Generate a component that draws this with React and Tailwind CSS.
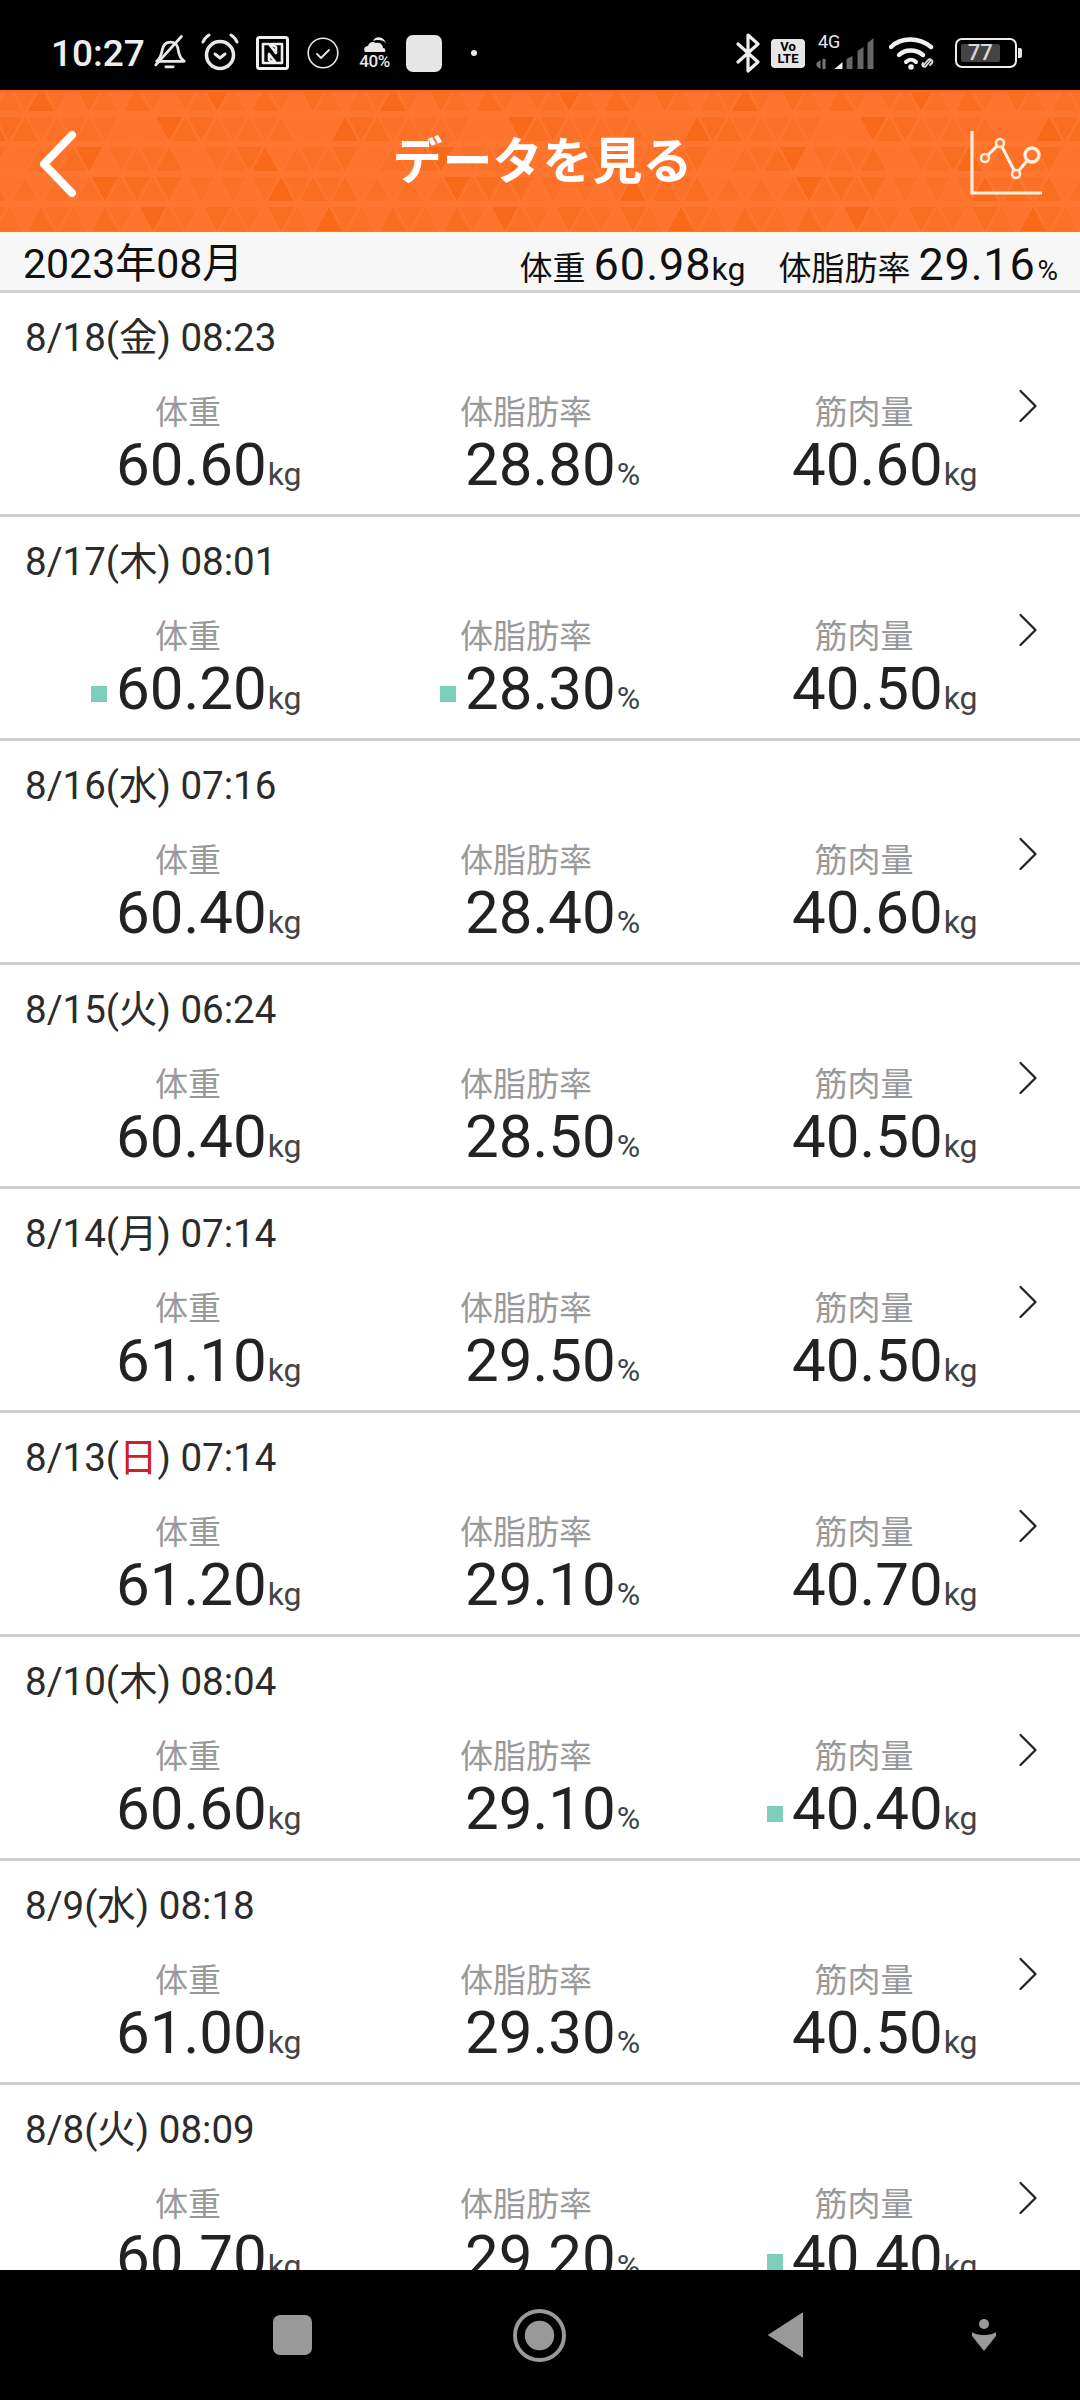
import { ChevronRight } from "lucide-react";

const font = { fontFamily: '"Roboto", "Noto Sans CJK JP", sans-serif' };

const records = [
  { date: "8/18(", day: "金", time: ") 08:23", w: "60.60", f: "28.80", m: "40.60" },
  { date: "8/17(", day: "木", time: ") 08:01", w: "60.20", f: "28.30", m: "40.50", wMark: true, fMark: true },
  { date: "8/16(", day: "水", time: ") 07:16", w: "60.40", f: "28.40", m: "40.60" },
  { date: "8/15(", day: "火", time: ") 06:24", w: "60.40", f: "28.50", m: "40.50" },
  { date: "8/14(", day: "月", time: ") 07:14", w: "61.10", f: "29.50", m: "40.50" },
  { date: "8/13(", day: "日", time: ") 07:14", w: "61.20", f: "29.10", m: "40.70", sunday: true },
  { date: "8/10(", day: "木", time: ") 08:04", w: "60.60", f: "29.10", m: "40.40", mMark: true },
  { date: "8/9(", day: "水", time: ") 08:18", w: "61.00", f: "29.30", m: "40.50" },
  { date: "8/8(", day: "火", time: ") 08:09", w: "60.70", f: "29.20", m: "40.40", mMark: true },
];

// header texture: rows of faint triangles, darkness varies from one to the next
const triangles = [];
for (let row = 0; row < 5; row++) {
  for (let col = -1; col < 70; col++) {
    const x = col * 16 - 4;
    const y = row * 30 - 8;
    const up = (col + row) % 2 === 0;
    const seed = (col * 7 + row * 13 + col * row * 3 + 40) % 11;
    const opacity = seed < 3 ? 0.1 : seed < 8 ? 0.25 : seed < 10 ? 0.42 : 0.65;
    const points = up
      ? `${x},${y + 27} ${x + 13},${y + 3} ${x + 26},${y + 27}`
      : `${x},${y + 3} ${x + 26},${y + 3} ${x + 13},${y + 27}`;
    triangles.push(<polygon key={`${row}-${col}`} points={points} fill="#f4640e" opacity={opacity} />);
  }
}

const StatusLeft = () => (
  <div className="flex items-center">
    <span className="text-[37px] leading-none text-[#eeeeee] font-medium ml-[51px] w-[102px]">10:27</span>
    {/* muted bell */}
    <svg className="w-[33px] h-[40px]" viewBox="0 0 36 40" fill="none" stroke="#e8e8e8" strokeWidth="3" strokeLinecap="round" strokeLinejoin="round">
      <path d="M4 29c4-3 5-6 6-12 1-6 4-9 9-9 4 0 7 2 8 6 1 5 1 11 7 15z" />
      <path d="M14 35h8" />
      <path d="M3 33 31 2" />
    </svg>
    {/* alarm */}
    <svg className="w-[38px] h-[40px] ml-[15px]" viewBox="0 0 38 40" fill="none" stroke="#e8e8e8" strokeLinecap="round" strokeLinejoin="round">
      <circle cx="19" cy="22" r="13.5" strokeWidth="3.5" />
      <path d="M2 9c1-3 3-5 6-7M36 9c-1-3-3-5-6-7" strokeWidth="3" />
      <path d="M14 21l5 4 5-4" strokeWidth="3" />
    </svg>
    {/* nfc */}
    <svg className="w-[33px] h-[34px] ml-[17px]" viewBox="0 0 33 34" fill="none">
      <rect x="1.5" y="1.5" width="30" height="31" rx="2" stroke="#f0f0f0" strokeWidth="3" />
      <path d="M7 27V8h6l7 9v-6l-5-3h11v19h-6l-7-9v6l5 3z" stroke="#f0f0f0" strokeWidth="2.6" strokeLinejoin="round" />
    </svg>
    {/* check circle */}
    <svg className="w-[32px] h-[32px] ml-[18px]" viewBox="0 0 32 32" fill="none" stroke="#e8e8e8" strokeLinecap="round" strokeLinejoin="round">
      <circle cx="16" cy="16" r="14.8" strokeWidth="1.6" />
      <path d="M10 17l4 4 8-8" strokeWidth="1.8" />
    </svg>
    {/* weather */}
    <div className="flex flex-col items-center ml-[19px] w-[33px]">
      <svg className="w-[24px] h-[17px]" viewBox="0 0 24 17" fill="#e8e8e8">
        <path d="M2 16c-2-3 0-6 3-6 1-4 5-5 8-3 3-1 7 1 7 5 2 0 3 2 2 4z" />
        <path d="M10 5c1-3 5-5 9-3 2 1 3 3 4 5-3-3-8-4-13-2z" />
      </svg>
      <span className="text-[17px] leading-[17px] text-[#e8e8e8] font-medium tracking-[-0.5px]">40%</span>
    </div>
    <div className="w-[36px] h-[37px] rounded-[7px] bg-[#e6e6e6] ml-[15px]" />
    <div className="w-[6px] h-[6px] rounded-full bg-[#e8e8e8] ml-[29px]" />
  </div>
);

const StatusRight = () => (
  <div className="flex items-center mr-[58px]">
    {/* bluetooth */}
    <svg className="w-[24px] h-[40px]" viewBox="0 0 24 40" fill="none" stroke="#eeeeee" strokeWidth="3.2" strokeLinejoin="round" strokeLinecap="round">
      <path d="M2 11l20 18-10 9V2l10 9L2 29" />
    </svg>
    {/* volte */}
    <div className="w-[34px] h-[29px] ml-[11px] rounded-[4px] bg-[#e6e6e6] flex flex-col items-center justify-center text-black text-[13px] leading-[12px] font-bold">
      <span>Vo</span>
      <span>LTE</span>
    </div>
    {/* 4g and signal */}
    <div className="relative w-[59px] h-[36px] ml-[10px]">
      <span className="absolute left-[3px] -top-[3px] text-[18px] leading-[20px] text-[#e8e8e8]">4G</span>
      <svg className="absolute inset-0 w-[59px] h-[36px]" viewBox="0 0 58 36">
        <path d="M1 28l4-3v9l-4-3zM7 24h3l0 10H7z" fill="#777777" />
        <path d="M19 34l8-7v7z" fill="#f0f0f0" />
        <path d="M31 34V24l6-3v13zM42 34V16l6-4v22zM52 34V8l6-5v31z" fill="#666666" />
      </svg>
    </div>
    {/* wifi */}
    <svg className="w-[50px] h-[36px] ml-[15px]" viewBox="0 0 50 36" fill="none" stroke="#f2f2f2" strokeLinecap="round">
      <path d="M2 12C12 2 30 2 42 12" strokeWidth="4.4" />
      <path d="M10 20c6-6 17-6 24 0" strokeWidth="4.4" />
      <path d="M17 27c3-3 7-3 10 0" strokeWidth="4" />
      <circle cx="22" cy="32" r="2" fill="#f2f2f2" strokeWidth="1.5" />
      <path d="M34 31l5-6c2-2 6 1 4 3l-2 2M42 25l-5 6c-2 2-5 0-3-3" stroke="#e0e0e0" strokeWidth="1.8" />
    </svg>
    {/* battery */}
    <div className="flex items-center ml-[16px]">
      <div className="w-[62px] h-[30px] rounded-[7px] border-[2.5px] border-[#eeeeee] p-[4px] flex">
        <div className="w-[77%] h-full bg-[#444444] rounded-[2px] flex items-center justify-center text-[22px] leading-none font-medium text-[#d8d8d8]">77</div>
      </div>
      <div className="w-[4px] h-[10px] ml-[1px] rounded-r-[2px] bg-[#e8e8e8]" />
    </div>
  </div>
);

const Value = ({ value, unit, mark, className }) => (
  <div className={`flex items-baseline leading-none mt-[6px] ${className}`}>
    <span className="w-[25px] h-[16px] flex-none self-center mt-[10px]">
      {mark && <span className="block w-[16px] h-[16px] bg-[#7dcfbb]" />}
    </span>
    <span className="text-[60px] leading-[56px] text-[#222222]">{value}</span>
    <span className="text-[32px] text-[#444444] ml-[1px]">{unit}</span>
  </div>
);

const Row = ({ r }) => (
  <div className="flex h-[224px] flex-none border-b-[3px] border-[#d0d0d0] bg-white">
    <div className="flex-1 min-w-0">
      <p className="pl-[25px] pt-[23px] text-[38.5px] leading-[44px] text-[#2b2b2b]">
        {r.date}
        <span className={r.sunday ? "text-[#cc2222]" : ""}>{r.day}</span>
        {r.time}
      </p>
      <div className="grid grid-cols-[338px_338px_338px] pl-[19px] pt-[35px]">
        <div>
          <p className="text-center text-[33px] leading-[36px] text-[#999999]">体重</p>
          <Value value={r.w} unit="kg" mark={r.wMark} className="ml-[72px]" />
        </div>
        <div>
          <p className="text-center text-[33px] leading-[36px] text-[#999999]">体脂肪率</p>
          <Value value={r.f} unit="%" mark={r.fMark} className="ml-[83px]" />
        </div>
        <div>
          <p className="text-center text-[33px] leading-[36px] text-[#999999]">筋肉量</p>
          <Value value={r.m} unit="kg" mark={r.mMark} className="ml-[72px]" />
        </div>
      </div>
    </div>
    <ChevronRight className="w-[60px] h-[60px] mt-[83px] mr-[22px] text-[#222222] flex-none" strokeWidth={0.9} />
  </div>
);

export default function App() {
  return (
    <div className="w-[1080px] h-[2400px] flex flex-col overflow-hidden bg-white" style={font}>
      {/* status bar */}
      <div className="h-[90px] flex-none bg-black flex items-center justify-between pt-[16px]">
        <StatusLeft />
        <StatusRight />
      </div>

      {/* header */}
      <div className="relative h-[142px] flex-none bg-[#ff7630] border-t-[2px] border-[#ff6a20] flex items-center justify-between">
        <svg className="absolute inset-0 w-[1080px] h-[140px]" viewBox="0 0 1080 140">
          {triangles}
        </svg>
        <svg className="relative w-[40px] h-[68px] ml-[38px] mt-[3px]" viewBox="0 0 40 68" fill="none" stroke="#ffffff" strokeWidth="8" strokeLinecap="round" strokeLinejoin="round">
          <path d="M34 5 6 34l28 29" />
        </svg>
        <h1 className="absolute left-0 right-0 text-center text-[50px] leading-none font-bold text-white pl-[5px]">データを見る</h1>
        <svg className="relative w-[72px] h-[66px] mr-[38px] mt-[3px]" viewBox="0 0 72 66" fill="none" stroke="#ffeeda" strokeWidth="2.6">
          <path d="M2 0v62h70" strokeWidth="3.2" />
          <path d="M15 27 30 12 46 43 62 24" stroke="#fff4ea" strokeWidth="3" />
          <circle cx="15" cy="27" r="4" fill="#ff7630" />
          <circle cx="30" cy="12" r="4" fill="#ff7630" />
          <circle cx="46" cy="43" r="4" fill="#ff7630" />
          <circle cx="62" cy="24" r="7" fill="#ff7630" strokeWidth="3.4" />
        </svg>
      </div>

      {/* month summary */}
      <div className="h-[61px] flex-none bg-[#f7f7f7] border-t-[2px] border-[#fff6dc] border-b-[3px] border-b-[#d0d0d0] flex items-center justify-between text-[#111111] pl-[23px] pr-[22px] pt-[4px]">
        <span className="text-[41px] leading-none">2023年08月</span>
        <div className="flex items-baseline leading-none">
          <span className="text-[33px]">体重</span>
          <span className="text-[45px] ml-[8px] tracking-[1px]">60.98</span>
          <span className="text-[32px]">kg</span>
          <span className="text-[33px] ml-[33px]">体脂肪率</span>
          <span className="text-[45px] ml-[8px] tracking-[0.8px]">29.16</span>
          <span className="text-[28px] ml-[2px]">%</span>
        </div>
      </div>

      {/* records */}
      <div className="flex-1 flex flex-col overflow-hidden">
        {records.map((r) => (
          <Row key={r.date + r.time} r={r} />
        ))}
      </div>

      {/* nav bar */}
      <div className="h-[130px] flex-none bg-black flex items-center pl-[273px]">
        <div className="w-[39px] h-[40px] rounded-[7px] bg-[#999999]" />
        <svg className="w-[53px] h-[53px] ml-[201px]" viewBox="0 0 54 54" fill="none">
          <circle cx="27" cy="27" r="25" stroke="#999999" strokeWidth="4" />
          <circle cx="27" cy="27" r="15" fill="#999999" />
        </svg>
        <svg className="w-[37px] h-[46px] ml-[201px]" viewBox="0 0 36 46" fill="#999999">
          <path d="M35 1v44L1 23z" stroke="#999999" strokeLinejoin="round" />
        </svg>
        <svg className="w-[28px] h-[32px] ml-[166px]" viewBox="0 0 26 32" fill="#999999">
          <circle cx="13" cy="5" r="5" />
          <path d="M1 13c4 4 20 4 24 0v4L13 32 1 17z" />
        </svg>
      </div>
    </div>
  );
}
